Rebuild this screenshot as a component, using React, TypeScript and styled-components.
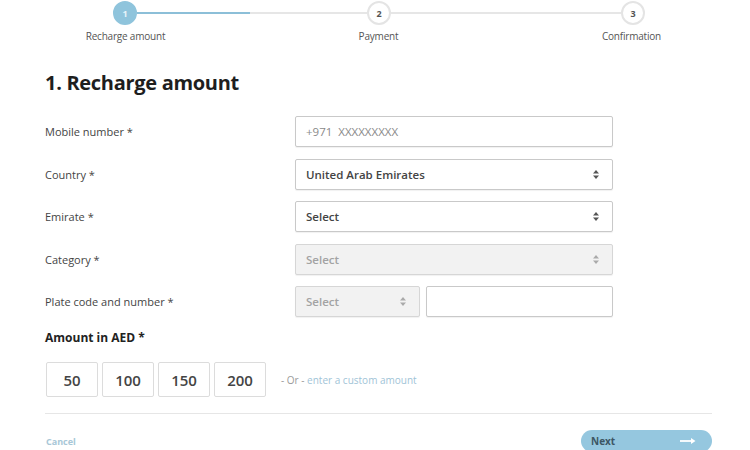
import React, { useState } from 'react';
import styled, { createGlobalStyle } from 'styled-components';

const GlobalStyle = createGlobalStyle`
  body {
    margin: 0;
    background: #ffffff;
    font-family: 'Open Sans', 'Liberation Sans', sans-serif;
    color: #444;
  }
  * { box-sizing: border-box; }
`;

const steps = ['Recharge amount', 'Payment', 'Confirmation'];
const amounts = [50, 100, 150, 200];

const SortIcon = () => (
  <svg width="8" height="11" viewBox="0 0 8 11">
    <path d="M4 1 L7 4.5 H1 Z" fill="currentColor" />
    <path d="M4 10 L7 6.5 H1 Z" fill="currentColor" />
  </svg>
);

const ArrowIcon = () => (
  <svg width="18" height="8" viewBox="0 0 18 8">
    <path d="M1 4 H15" stroke="#fff" strokeWidth="1.8" />
    <path d="M12 1 L16.5 4 L12 7 Z" fill="#fff" />
  </svg>
);

const App = () => {
  const [amount, setAmount] = useState<number | null>(null);

  return (
    <Wrapper>
      <GlobalStyle />
      <Stepper>
        <Track>
          <Circle $active>1</Circle>
          <Line $progress={49} />
          <Circle>2</Circle>
          <Line $progress={0} />
          <Circle>3</Circle>
        </Track>
        <StepLabels>
          {steps.map((s) => (
            <StepLabel key={s}>{s}</StepLabel>
          ))}
        </StepLabels>
      </Stepper>

      <Content>
        <Title>1. Recharge amount</Title>
        <Form>
          <Row>
            <Label>Mobile number *</Label>
            <Field>
              <TextBox placeholder="+971  XXXXXXXXX" />
            </Field>
          </Row>
          <Row>
            <Label>Country *</Label>
            <Field>
              <SelectBox>
                United Arab Emirates
                <SortIcon />
              </SelectBox>
            </Field>
          </Row>
          <Row>
            <Label>Emirate *</Label>
            <Field>
              <SelectBox>
                Select
                <SortIcon />
              </SelectBox>
            </Field>
          </Row>
          <Row>
            <Label>Category *</Label>
            <Field>
              <SelectBox $disabled>
                Select
                <SortIcon />
              </SelectBox>
            </Field>
          </Row>
          <Row>
            <Label>Plate code and number *</Label>
            <Field $split>
              <SelectBox $disabled>
                Select
                <SortIcon />
              </SelectBox>
              <TextBox />
            </Field>
          </Row>
        </Form>

        <AmountTitle>Amount in AED *</AmountTitle>
        <AmountRow>
          {amounts.map((a) => (
            <AmountButton key={a} $selected={amount === a} onClick={() => setAmount(a)}>
              {a}
            </AmountButton>
          ))}
          <Custom>
            - Or - <a>enter a custom amount</a>
          </Custom>
        </AmountRow>

        <Divider />
        <Actions>
          <Cancel>Cancel</Cancel>
          <NextButton>
            Next
            <ArrowIcon />
          </NextButton>
        </Actions>
      </Content>
    </Wrapper>
  );
};

export default App;

const Wrapper = styled.div`
  width: 750px;
  height: 450px;
  overflow: hidden;
`;

const Stepper = styled.div`
  padding-top: 1px;
`;

const Track = styled.div`
  display: flex;
  align-items: center;
  width: 532px;
  margin-left: 113px;
`;

const Circle = styled.div<{ $active?: boolean }>`
  width: 24px;
  height: 24px;
  border-radius: 50%;
  flex: none;
  display: flex;
  align-items: center;
  justify-content: center;
  font-size: 9px;
  font-weight: 700;
  background: ${(p) => (p.$active ? '#8fc4dc' : '#fff')};
  color: ${(p) => (p.$active ? '#e8f4fa' : '#555')};
  border: 2px solid ${(p) => (p.$active ? '#8fc4dc' : '#e4e4e4')};
`;

const Line = styled.div<{ $progress: number }>`
  flex: 1;
  height: 2px;
  background: linear-gradient(
    to right,
    #8cbfd8 ${(p) => p.$progress}%,
    #e6e6e6 ${(p) => p.$progress}%
  );
`;

const StepLabels = styled.div`
  display: grid;
  grid-template-columns: repeat(3, 253px);
  margin-left: -1px;
  margin-top: 4px;
`;

const StepLabel = styled.div`
  text-align: center;
  font-size: 10px;
  line-height: 14px;
  color: #555;
  letter-spacing: -0.2px;
`;

const Content = styled.div`
  width: 667px;
  margin-left: 45px;
`;

const Title = styled.h1`
  margin: 26px 0 0;
  font-size: 20px;
  line-height: 28px;
  font-weight: 700;
  color: #1e1e1e;
  letter-spacing: -0.3px;
`;

const Form = styled.div`
  display: flex;
  flex-direction: column;
  gap: 11.5px;
  margin-top: 19px;
`;

const Row = styled.div`
  display: grid;
  grid-template-columns: 250px 318px;
  align-items: center;
`;

const Label = styled.div`
  font-size: 11px;
  color: #444;
`;

const Field = styled.div<{ $split?: boolean }>`
  display: grid;
  grid-template-columns: ${(p) => (p.$split ? '125px 1fr' : '1fr')};
  gap: 6px;
`;

const TextBox = styled.input`
  height: 31px;
  width: 100%;
  border: 1px solid #c9c9c9;
  border-radius: 2px;
  padding: 0 10px;
  font-family: inherit;
  font-size: 11.5px;
  color: #444;
  box-shadow: 0 1px 1px rgba(0, 0, 0, 0.06);
  outline: none;
  &::placeholder {
    color: #8a8a8a;
  }
`;

const SelectBox = styled.div<{ $disabled?: boolean }>`
  height: 31px;
  display: flex;
  align-items: center;
  justify-content: space-between;
  padding: 0 12px 0 10px;
  border: 1px solid ${(p) => (p.$disabled ? '#d6d6d6' : '#c9c9c9')};
  border-radius: 2px;
  background: ${(p) => (p.$disabled ? '#f2f2f2' : '#fff')};
  color: ${(p) => (p.$disabled ? '#a3a3a3' : '#444')};
  font-size: 11.5px;
  font-weight: 600;
  box-shadow: 0 1px 1px rgba(0, 0, 0, 0.06);
  svg {
    color: ${(p) => (p.$disabled ? '#aaa' : '#555')};
  }
`;

const AmountTitle = styled.div`
  margin-top: 13px;
  font-size: 12px;
  font-weight: 700;
  color: #222;
  line-height: 16px;
`;

const AmountRow = styled.div`
  display: flex;
  align-items: center;
  gap: 4px;
  margin-top: 16px;
  margin-left: 1px;
`;

const AmountButton = styled.button<{ $selected?: boolean }>`
  width: 52px;
  height: 35px;
  border: 1px solid ${(p) => (p.$selected ? '#8fc4dc' : '#dcdcdc')};
  border-radius: 2px;
  background: #fff;
  font-family: inherit;
  font-size: 15px;
  font-weight: 600;
  color: #444;
  cursor: pointer;
  padding: 0;
`;

const Custom = styled.span`
  margin-left: 11px;
  font-size: 10px;
  color: #9a9a9a;
  a {
    color: #9fc4d7;
  }
`;

const Divider = styled.hr`
  margin: 16px 0 0;
  border: none;
  border-top: 1px solid #e6e6e6;
`;

const Actions = styled.div`
  display: flex;
  justify-content: space-between;
  align-items: center;
  margin-top: 16px;
`;

const Cancel = styled.a`
  margin-left: 1px;
  font-size: 9px;
  font-weight: 700;
  color: #a8c7d7;
`;

const NextButton = styled.button`
  width: 131px;
  height: 22px;
  border: none;
  border-radius: 11px;
  background: #95c7df;
  display: flex;
  align-items: center;
  justify-content: space-between;
  padding: 0 15px 0 10px;
  font-family: inherit;
  font-size: 10px;
  font-weight: 700;
  color: #3d5664;
  cursor: pointer;
`;
